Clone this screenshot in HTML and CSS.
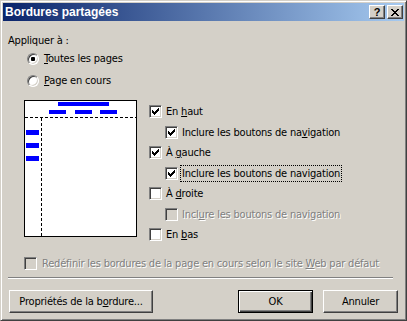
FILE: index.html
```html
<!DOCTYPE html>
<html>
<head>
	<title>Bordures partagées</title>
	<meta charset="utf-8">
	<link rel="stylesheet" href="styles.css">
</head>
<body>

	<div class="window">

		<div class="titlebar">
			<span class="title">Bordures partagées</span>
			<div class="caption-btns">
				<span class="cap-btn help">?</span>
				<span class="cap-btn">
					<svg width="8" height="7" viewBox="0 0 8 7" shape-rendering="crispEdges">
						<rect x="0" y="0" width="2" height="1"/><rect x="6" y="0" width="2" height="1"/>
						<rect x="1" y="1" width="2" height="1"/><rect x="5" y="1" width="2" height="1"/>
						<rect x="2" y="2" width="4" height="1"/>
						<rect x="3" y="3" width="2" height="1"/>
						<rect x="2" y="4" width="4" height="1"/>
						<rect x="1" y="5" width="2" height="1"/><rect x="5" y="5" width="2" height="1"/>
						<rect x="0" y="6" width="2" height="1"/><rect x="6" y="6" width="2" height="1"/>
					</svg>
				</span>
			</div>
		</div>

		<div class="content">
			<div class="group-label">Appliquer à :</div>

			<div class="radios">
				<div class="radio-row first"><span class="radio checked"></span><span><u>T</u>outes les pages</span></div>
				<div class="radio-row"><span class="radio"></span><span><u>P</u>age en cours</span></div>
			</div>

			<div class="borders">
				<svg class="preview" width="113" height="137" viewBox="0 0 113 137" shape-rendering="crispEdges">
					<rect x="0.5" y="0.5" width="112" height="136" fill="#fff" stroke="#000"/>
					<rect x="34" y="2" width="51" height="4" fill="#0000ff"/>
					<rect x="25" y="10" width="17" height="4" fill="#0000ff"/>
					<rect x="51" y="10" width="17" height="4" fill="#0000ff"/>
					<rect x="76" y="10" width="17" height="4" fill="#0000ff"/>
					<rect x="2" y="30" width="13" height="5" fill="#0000ff"/>
					<rect x="2" y="43" width="13" height="5" fill="#0000ff"/>
					<rect x="2" y="56" width="13" height="5" fill="#0000ff"/>
					<line x1="1" y1="17.5" x2="112" y2="17.5" stroke="#000" stroke-dasharray="3 2"/>
					<line x1="17.5" y1="18" x2="17.5" y2="136" stroke="#000" stroke-dasharray="3 2"/>
				</svg>

				<div class="options">
					<div class="check-row">
						<span class="check on"></span><span>En <u>h</u>aut</span>
					</div>
					<div class="check-row sub">
						<span class="check on"></span><span>Inclure les boutons de na<u>v</u>igation</span>
					</div>
					<div class="check-row">
						<span class="check on"></span><span>À <u>g</u>auche</span>
					</div>
					<div class="check-row sub">
						<span class="check on"></span><span class="focus">Inclure les boutons de navigation</span>
					</div>
					<div class="check-row">
						<span class="check"></span><span>À <u>d</u>roite</span>
					</div>
					<div class="check-row sub disabled">
						<span class="check"></span><span>Incl<u>u</u>re les boutons de navigation</span>
					</div>
					<div class="check-row">
						<span class="check"></span><span>En <u>b</u>as</span>
					</div>
				</div>
			</div>

			<div class="check-row reset disabled">
				<span class="check"></span><span>Redéfinir les bordures de la page en cours selon le site <u>W</u>eb par défaut</span>
			</div>

			<div class="separator"></div>

			<div class="buttons">
				<div class="btn wide">Propriétés de la b<u>o</u>rdure...</div>
				<div class="btn default">OK</div>
				<div class="btn">Annuler</div>
			</div>
		</div>

	</div>

</body>
</html>
```

FILE: styles.css
```css
* {
	box-sizing: border-box;
}

html, body {
	margin: 0;
	padding: 0;
	background: #d4d0c8;
}

body {
	font-family: "DejaVu Sans Condensed", "Liberation Sans", sans-serif;
	font-size: 11px;
	letter-spacing: -0.2px;
	color: #000;
}

.window {
	width: 407px;
	height: 321px;
	padding: 2px;
	background: #d4d0c8;
	border: 1px solid;
	border-color: #d4d0c8 #404040 #404040 #d4d0c8;
	box-shadow: inset 1px 1px #fff, inset -1px -1px #808080;
}

/* title bar */
.titlebar {
	height: 18px;
	display: flex;
	align-items: center;
	padding-left: 2px;
	padding-right: 1px;
	background: linear-gradient(to right, #0a246a, #a6caf0);
}

.title {
	flex: 1;
	color: #fff;
	font-family: "Liberation Sans", sans-serif;
	font-weight: bold;
	font-size: 12px;
	letter-spacing: 0;
}

.caption-btns {
	display: flex;
	gap: 2px;
}

.cap-btn {
	width: 16px;
	height: 14px;
	display: flex;
	align-items: center;
	justify-content: center;
	background: #d4d0c8;
	border: 1px solid;
	border-color: #fff #404040 #404040 #fff;
	box-shadow: inset -1px -1px #808080;
}

.help {
	font-family: "Liberation Sans", sans-serif;
	font-weight: bold;
	font-size: 11px;
	line-height: 12px;
	padding-bottom: 1px;
}

/* content */
.content {
	padding-left: 5px;
}

.group-label {
	margin-top: 13px;
	line-height: 13px;
}

.radios {
	padding-left: 19px;
}

.radio-row {
	display: flex;
	align-items: center;
	gap: 5px;
	height: 13px;
	margin-top: 9px;
}

.radio-row.first {
	margin-top: 5px;
}

.radio {
	width: 12px;
	height: 12px;
	border-radius: 50%;
	background: #fff;
	border: 1px solid;
	border-color: #808080 #fff #fff #808080;
	box-shadow: inset 1px 1px #404040, inset -1px -1px #d4d0c8;
	display: flex;
	align-items: center;
	justify-content: center;
}

.radio.checked::after {
	content: "";
	width: 4px;
	height: 4px;
	border-radius: 1px;
	background: #000;
}

.borders {
	display: flex;
	margin-top: 13px;
	padding-left: 16px;
}

.preview {
	display: block;
	flex-shrink: 0;
}

.options {
	margin-left: 12px;
	padding-top: 5px;
	display: flex;
	flex-direction: column;
	gap: 7.5px;
}

.check-row {
	display: flex;
	align-items: center;
	gap: 4px;
	height: 13px;
	white-space: nowrap;
}

.check-row.sub {
	padding-left: 16px;
}

.check {
	width: 13px;
	height: 13px;
	flex-shrink: 0;
	background: #fff;
	border: 1px solid;
	border-color: #808080 #fff #fff #808080;
	box-shadow: inset 1px 1px #404040, inset -1px -1px #d4d0c8;
}

.check.on {
	background: #fff url("data:image/svg+xml,%3Csvg xmlns='http://www.w3.org/2000/svg' width='11' height='11' shape-rendering='crispEdges'%3E%3Cpath d='M2 4h1v3H2zM3 5h1v3H3zM4 6h1v3H4zM5 5h1v3H5zM6 4h1v3H6zM7 3h1v3H7zM8 2h1v3H8z'/%3E%3C/svg%3E") no-repeat 0 0;
}

.disabled {
	color: #808080;
	text-shadow: 1px 1px 0 #fff;
}

.disabled .check {
	background: #d4d0c8;
}

.focus {
	border: 1px dotted #000;
	padding: 1px 1px;
	margin: -2px -2px;
	line-height: 13px;
}

.reset {
	margin-top: 16px;
	padding-left: 16px;
	gap: 5px;
}

.separator {
	width: 385px;
	margin-top: 7px;
	border-top: 1px solid #808080;
	border-bottom: 1px solid #fff;
}

.buttons {
	display: flex;
	width: 390px;
	margin-top: 11px;
	padding-left: 1px;
	gap: 10px;
}

.btn {
	width: 75px;
	height: 23px;
	display: flex;
	align-items: center;
	justify-content: center;
	background: #d4d0c8;
	border: 1px solid;
	border-color: #fff #404040 #404040 #fff;
	box-shadow: inset -1px -1px #808080;
	cursor: pointer;
}

.btn.wide {
	width: 144px;
	margin-right: auto;
}

.btn.default {
	border: 1px solid #000;
	box-shadow: inset 1px 1px #fff, inset -1px -1px #404040, inset -2px -2px #808080;
}
```
